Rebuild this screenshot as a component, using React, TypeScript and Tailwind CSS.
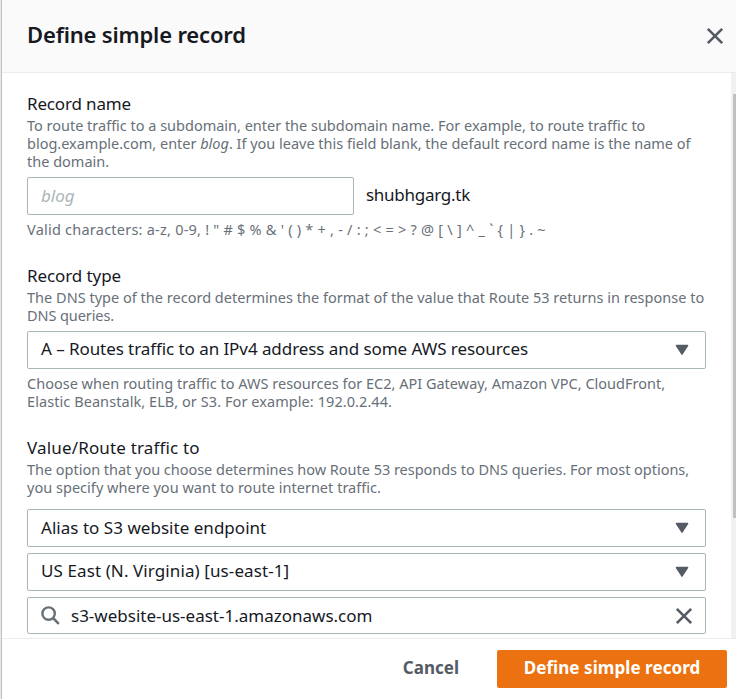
import type { ReactNode } from "react";

type Row = { text: ReactNode; tracking?: string };

function Help({ rows, className = "" }: { rows: Row[]; className?: string }) {
  return (
    <div className={`text-[14.5px] leading-[18px] text-[#687078] ${className}`}>
      {rows.map((row, i) => (
        <div key={i} className={`whitespace-pre ${row.tracking ?? ""}`}>
          {row.text}
        </div>
      ))}
    </div>
  );
}

function Label({ children, className = "" }: { children: ReactNode; className?: string }) {
  return <div className={`h-6 text-[17px] leading-6 text-[#16191f] ${className}`}>{children}</div>;
}

function Select({ children, className = "" }: { children: ReactNode; className?: string }) {
  return (
    <div className="flex h-[38px] w-full items-center justify-between rounded-[2px] border border-[#aab7b8] bg-white pl-[13px] pr-4">
      <span className={`whitespace-nowrap text-[17px] leading-6 text-[#16191f] ${className}`}>{children}</span>
      <svg className="h-[12px] w-[14px]" viewBox="0 0 14 12">
        <path d="M1.4 1.5h11.2L7 10.2z" fill="#545b64" stroke="#545b64" strokeWidth="1.4" strokeLinejoin="round" />
      </svg>
    </div>
  );
}

function Cross() {
  return (
    <svg className="h-[18px] w-[18px]" viewBox="0 0 18 18">
      <path d="M1.8 1.8l14.4 14.4M16.2 1.8L1.8 16.2" fill="none" stroke="#545b64" strokeWidth="2.6" />
    </svg>
  );
}

export default function App() {
  return (
    <div className="flex h-[699px] w-[736px] overflow-hidden bg-[#e9ebed] font-['Noto_Sans','Open_Sans',sans-serif]">
      <div className="w-[2px] shrink-0 border-r border-[#bcc4c6] bg-[#e4e8ea]" />
      <div className="flex min-w-0 flex-1 flex-col bg-white">
        <header className="flex h-[73px] shrink-0 items-center justify-between border-b border-[#eaeded] bg-[#fafafa] pl-[25px] pr-3">
          <h1 className="pb-[4px] text-[22px] font-semibold leading-7 tracking-[-0.17px] text-[#16191f]">Define simple record</h1>
          <Cross />
        </header>

        <div className="flex min-h-0 flex-1">
          <main className="w-[704px] pl-[25px] pt-[19px]">
            <section>
              <Label className="tracking-[-0.155px]">Record name</Label>
              <Help
                rows={[
                  {
                    text: "To route traffic to a subdomain, enter the subdomain name. For example, to route traffic to",
                    tracking: "tracking-[-0.01px]",
                  },
                  {
                    text: (
                      <>
                        blog.example.com, enter <em>blog</em>. If you leave this field blank, the default record name is the name of
                      </>
                    ),
                    tracking: "tracking-[-0.01px]",
                  },
                  { text: "the domain." },
                ]}
              />
              <div className="mt-[7px] flex items-center">
                <div className="flex h-[38px] w-[327px] items-center rounded-[2px] border border-[#aab7b8] bg-white pl-[13px] text-[17px] italic text-[#aab7b8]">
                  blog
                </div>
                <span className="ml-[12px] pb-[2px] text-[17px] tracking-[-0.27px] text-[#16191f]">shubhgarg.tk</span>
              </div>
              <Help
                className="mt-[5px]"
                rows={[
                  {
                    text: "Valid characters: a-z, 0-9, ! \" # $ % & ' ( ) * + , - / : ; < = > ? @ [ \\ ] ^ _ ` { | } . ~",
                    tracking: "tracking-[0.23px]",
                  },
                ]}
              />
            </section>

            <section className="mt-[26px]">
              <Label className="tracking-[-0.09px]">Record type</Label>
              <Help
                rows={[
                  {
                    text: "The DNS type of the record determines the format of the value that Route 53 returns in response to",
                    tracking: "tracking-[0.015px]",
                  },
                  { text: "DNS queries.", tracking: "tracking-[-0.09px]" },
                ]}
              />
              <div className="mt-[7px]">
                <Select className="pb-[2px] tracking-[-0.07px]">
                  A – Routes traffic to an IPv4 address and some AWS resources
                </Select>
              </div>
              <Help
                className="mt-[5px]"
                rows={[
                  {
                    text: "Choose when routing traffic to AWS resources for EC2, API Gateway, Amazon VPC, CloudFront,",
                    tracking: "tracking-[0.005px]",
                  },
                  { text: "Elastic Beanstalk, ELB, or S3. For example: 192.0.2.44.", tracking: "tracking-[0.07px]" },
                ]}
              />
            </section>

            <section className="mt-[26px]">
              <Label className="tracking-[0.16px]">Value/Route traffic to</Label>
              <Help
                rows={[
                  {
                    text: "The option that you choose determines how Route 53 responds to DNS queries. For most options,",
                    tracking: "tracking-[-0.027px]",
                  },
                  { text: "you specify where you want to route internet traffic.", tracking: "tracking-[0.025px]" },
                ]}
              />
              <div className="mt-[13px] flex flex-col gap-[6px]">
                <Select className="tracking-[0.03px]">Alias to S3 website endpoint</Select>
                <Select className="pb-[2px] tracking-[0.1px]">US East (N. Virginia) [us-east-1]</Select>
                <div className="flex h-[37px] items-center rounded-[2px] border border-[#aab7b8] bg-white pl-[13px] pr-[12px]">
                  <svg className="h-[19px] w-[19px]" viewBox="0 0 19 19" fill="none" stroke="#687078">
                    <circle cx="7.6" cy="7.6" r="6.2" strokeWidth="2.4" />
                    <path d="M12 12l5.8 5.8" strokeWidth="2.6" />
                  </svg>
                  <span className="ml-[11px] flex-1 text-[17px] text-[#16191f]">s3-website-us-east-1.amazonaws.com</span>
                  <Cross />
                </div>
              </div>
            </section>
          </main>
          <div className="ml-auto w-[5px] bg-[#f1f1f1] pl-[2px] pt-[21px]">
            <div className="h-[424px] bg-[#c1c1c1]" />
          </div>
        </div>

        <footer className="flex h-[61px] shrink-0 items-start justify-end border-t border-[#eaeded] bg-white pr-[9px] pt-[11px]">
          <button className="mr-[38px] h-[38px] pb-[2px] text-[17px] font-bold leading-6 text-[#545b64]">Cancel</button>
          <button className="h-[38px] w-[230px] rounded-[2px] bg-[#ec7211] pb-[2px] text-[17px] font-bold leading-6 tracking-[0.07px] text-white">
            Define simple record
          </button>
        </footer>
      </div>
    </div>
  );
}
